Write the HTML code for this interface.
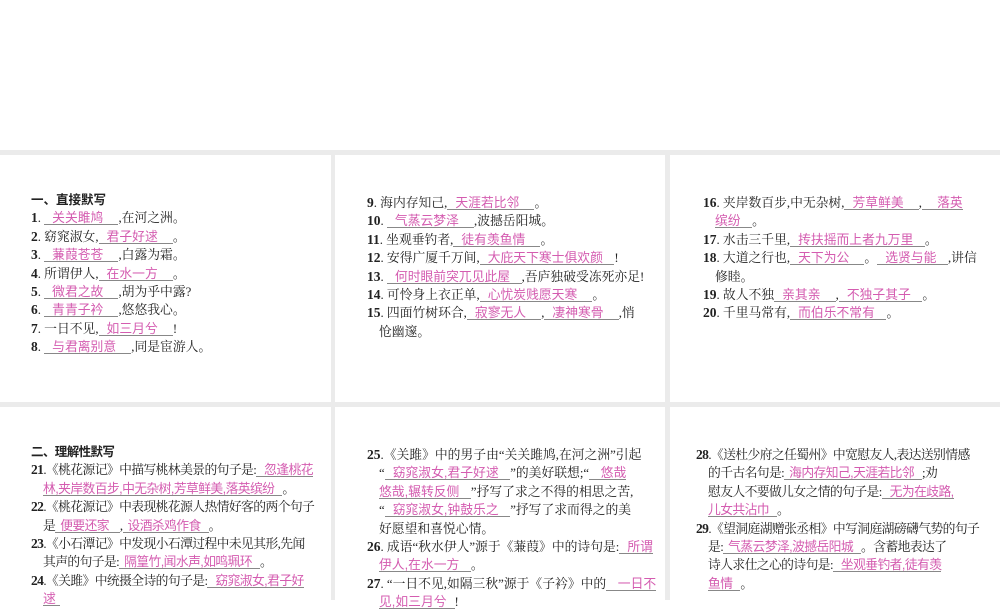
<!DOCTYPE html>
<html><head><meta charset="utf-8">
<style>
*{margin:0;padding:0;box-sizing:border-box}
body{width:1000px;height:600px;background:#fff;position:relative;overflow:hidden;font-family:"Liberation Serif","Noto Serif CJK SC",serif;font-size:12.8px;color:#222}
.g{position:absolute;background:#ebebeb}
.col{position:absolute;line-height:18.4px}
.col div{height:18.4px;white-space:nowrap}
b{font-family:"Liberation Serif",serif;font-weight:bold;font-size:13.5px}
.a{color:#d45cb0;font-family:"Liberation Sans","Noto Sans CJK SC",sans-serif;border-bottom:1px solid #888;padding:0 8px 0 8px;display:inline-block;line-height:13px}
.h{font-family:"Liberation Sans","Noto Sans CJK SC",sans-serif;font-weight:bold;font-size:12.5px}
.i{padding-left:12px}
.t{letter-spacing:-0.6px}
.t .a{padding:0 5px}
</style></head><body>
<div class="g" style="left:0;top:150px;width:1000px;height:5px"></div>
<div class="g" style="left:331px;top:150px;width:4px;height:450px"></div>
<div class="g" style="left:665px;top:150px;width:5px;height:450px"></div>
<div class="g" style="left:0;top:402px;width:1000px;height:5px"></div>

<div class="col" style="left:31px;top:191px;width:290px">
<div class="h">一、直接默写</div>
<div><b>1</b>. <span class="a">关关雎鸠&nbsp;&nbsp;</span>,在河之洲。</div>
<div><b>2</b>. 窈窕淑女,<span class="a">君子好逑&nbsp;&nbsp;</span>。</div>
<div><b>3</b>. <span class="a">蒹葭苍苍&nbsp;&nbsp;</span>,白露为霜。</div>
<div><b>4</b>. 所谓伊人,<span class="a">在水一方&nbsp;&nbsp;</span>。</div>
<div><b>5</b>. <span class="a">微君之故&nbsp;&nbsp;</span>,胡为乎中露?</div>
<div><b>6</b>. <span class="a">青青子衿&nbsp;&nbsp;</span>,悠悠我心。</div>
<div><b>7</b>. 一日不见,<span class="a">如三月兮&nbsp;&nbsp;</span>!</div>
<div><b>8</b>. <span class="a">与君离别意&nbsp;&nbsp;</span>,同是宦游人。</div>
</div>

<div class="col" style="left:367px;top:194px;width:282px">
<div><b>9</b>. 海内存知己,<span class="a">天涯若比邻&nbsp;&nbsp;</span>。</div>
<div><b>10</b>. <span class="a">气蒸云梦泽&nbsp;&nbsp;</span>,波撼岳阳城。</div>
<div><b>11</b>. 坐观垂钓者,<span class="a">徒有羡鱼情&nbsp;&nbsp;</span>。</div>
<div><b>12</b>. 安得广厦千万间,<span class="a">大庇天下寒士俱欢颜&nbsp;</span>!</div>
<div><b>13</b>. <span class="a">何时眼前突兀见此屋&nbsp;</span>,吾庐独破受冻死亦足!</div>
<div><b>14</b>. 可怜身上衣正单,<span class="a">心忧炭贱愿天寒&nbsp;&nbsp;</span>。</div>
<div><b>15</b>. 四面竹树环合,<span class="a">寂寥无人&nbsp;&nbsp;</span>,<span class="a">凄神寒骨&nbsp;&nbsp;</span>,悄</div>
<div class="i">怆幽邃。</div>
</div>

<div class="col" style="left:703px;top:194px;width:280px">
<div><b>16</b>. 夹岸数百步,中无杂树,<span class="a">芳草鲜美&nbsp;&nbsp;</span>,<span class="a" style="padding-right:0">&nbsp;&nbsp;落英</span></div>
<div class="i"><span class="a" style="padding-left:0">缤纷&nbsp;</span>。</div>
<div><b>17</b>. 水击三千里,<span class="a">抟扶摇而上者九万里&nbsp;</span>。</div>
<div><b>18</b>. 大道之行也,<span class="a">天下为公&nbsp;&nbsp;</span>。<span class="a">选贤与能&nbsp;</span>,讲信</div>
<div class="i">修睦。</div>
<div><b>19</b>. 故人不独<span class="a">亲其亲&nbsp;&nbsp;</span>,<span class="a">不独子其子&nbsp;</span>。</div>
<div><b>20</b>. 千里马常有,<span class="a">而伯乐不常有&nbsp;</span>。</div>
</div>

<div class="col t" style="left:31px;top:443px;width:290px">
<div class="h">二、理解性默写</div>
<div><b>21</b>.《桃花源记》中描写桃林美景的句子是:<span class="a" style="padding-right:0">&nbsp;忽逢桃花</span></div>
<div class="i"><span class="a" style="padding-left:0">林,夹岸数百步,中无杂树,芳草鲜美,落英缤纷&nbsp;</span>。</div>
<div><b>22</b>.《桃花源记》中表现桃花源人热情好客的两个句子</div>
<div class="i">是<span class="a">便要还家&nbsp;&nbsp;</span>,<span class="a">设酒杀鸡作食&nbsp;</span>。</div>
<div><b>23</b>.《小石潭记》中发现小石潭过程中未见其形,先闻</div>
<div class="i">其声的句子是:<span class="a">隔篁竹,闻水声,如鸣珮环&nbsp;</span>。</div>
<div><b>24</b>.《关雎》中统摄全诗的句子是:<span class="a" style="padding-right:0">&nbsp;窈窕淑女,君子好</span></div>
<div class="i"><span class="a" style="padding-left:0">逑</span></div>
</div>

<div class="col" style="left:367px;top:446px;width:282px">
<div><b>25</b>.《关雎》中的男子由“关关雎鸠,在河之洲”引起</div>
<div class="i">“<span class="a">窈窕淑女,君子好逑&nbsp;</span>”的美好联想;“<span class="a" style="padding-right:0">&nbsp;悠哉</span></div>
<div class="i"><span class="a" style="padding-left:0">悠哉,辗转反侧&nbsp;</span>”抒写了求之不得的相思之苦,</div>
<div class="i">“<span class="a">窈窕淑女,钟鼓乐之&nbsp;</span>”抒写了求而得之的美</div>
<div class="i">好愿望和喜悦心情。</div>
<div><b>26</b>. 成语“秋水伊人”源于《蒹葭》中的诗句是:<span class="a" style="padding-right:0">所谓</span></div>
<div class="i"><span class="a" style="padding-left:0">伊人,在水一方&nbsp;</span>。</div>
<div><b>27</b>. “一日不见,如隔三秋”源于《子衿》中的<span class="a" style="padding-right:0">&nbsp;一日不</span></div>
<div class="i"><span class="a" style="padding-left:0">见,如三月兮</span>!</div>
</div>

<div class="col t" style="left:696px;top:446px;width:290px">
<div><b>28</b>.《送杜少府之任蜀州》中宽慰友人,表达送别情感</div>
<div class="i">的千古名句是:<span class="a">海内存知己,天涯若比邻&nbsp;</span>;劝</div>
<div class="i">慰友人不要做儿女之情的句子是:<span class="a" style="padding-right:0">&nbsp;无为在歧路,</span></div>
<div class="i"><span class="a" style="padding-left:0">儿女共沾巾&nbsp;</span>。</div>
<div><b>29</b>.《望洞庭湖赠张丞相》中写洞庭湖磅礴气势的句子</div>
<div class="i">是:<span class="a">气蒸云梦泽,波撼岳阳城&nbsp;</span>。含蓄地表达了</div>
<div class="i">诗人求仕之心的诗句是:<span class="a" style="padding-right:0">&nbsp;坐观垂钓者,徒有羡</span></div>
<div class="i"><span class="a" style="padding-left:0">鱼情&nbsp;</span>。</div>
</div>
</body></html>
